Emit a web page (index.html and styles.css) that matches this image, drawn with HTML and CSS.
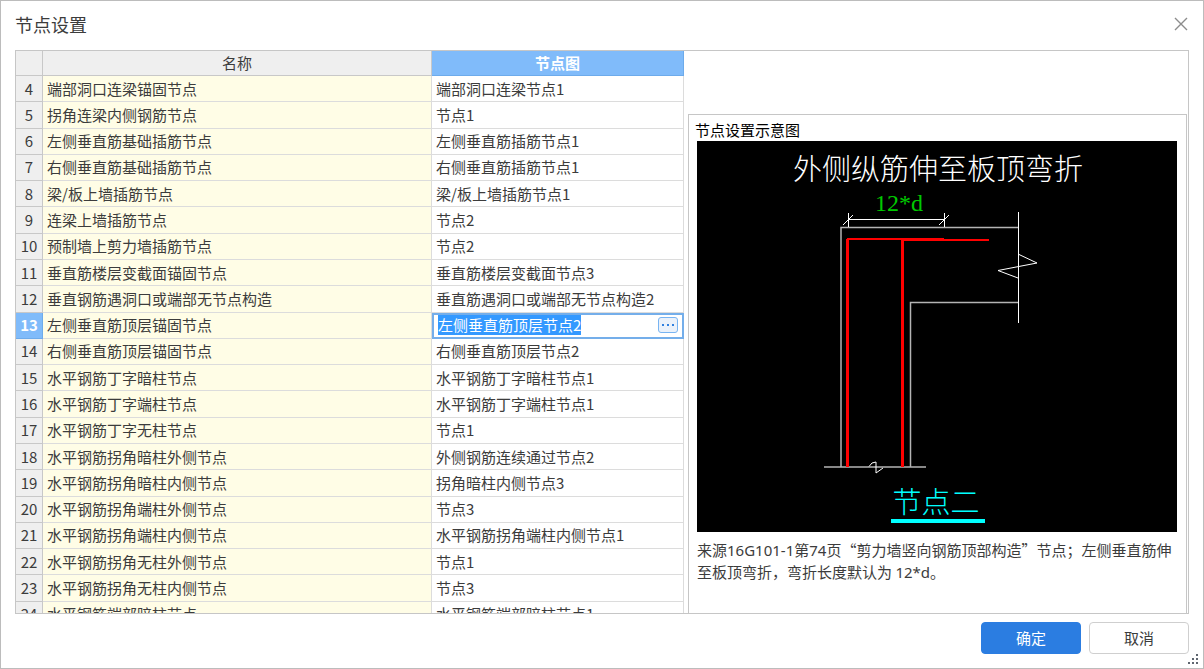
FILE: index.html
```html
<!DOCTYPE html>
<html lang="zh-CN">
<head>
<meta charset="utf-8">
<title>节点设置</title>
<link rel="stylesheet" href="styles.css">
</head>
<body>
<main class="dialog">
  <header class="titlebar">
    <h1 class="title">节点设置</h1>
    <button class="close" type="button" aria-label="关闭">
      <svg width="14" height="14" viewBox="0 0 14 14"><path d="M1 1L13 13M13 1L1 13" stroke="#8c8c8c" stroke-width="1.4" fill="none"/></svg>
    </button>
  </header>
  <div class="content">
    <div class="grid-pane">
      <table class="nodes">
        <colgroup><col class="col-no"><col class="col-name"><col class="col-node"></colgroup>
        <thead><tr><th></th><th>名称</th><th class="active">节点图</th></tr></thead>
        <tbody>
          <tr><th>4</th><td>端部洞口连梁锚固节点</td><td>端部洞口连梁节点1</td></tr>
          <tr><th>5</th><td>拐角连梁内侧钢筋节点</td><td>节点1</td></tr>
          <tr><th>6</th><td>左侧垂直筋基础插筋节点</td><td>左侧垂直筋插筋节点1</td></tr>
          <tr><th>7</th><td>右侧垂直筋基础插筋节点</td><td>右侧垂直筋插筋节点1</td></tr>
          <tr><th>8</th><td>梁/板上墙插筋节点</td><td>梁/板上墙插筋节点1</td></tr>
          <tr><th>9</th><td>连梁上墙插筋节点</td><td>节点2</td></tr>
          <tr><th>10</th><td>预制墙上剪力墙插筋节点</td><td>节点2</td></tr>
          <tr><th>11</th><td>垂直筋楼层变截面锚固节点</td><td>垂直筋楼层变截面节点3</td></tr>
          <tr><th>12</th><td>垂直钢筋遇洞口或端部无节点构造</td><td>垂直筋遇洞口或端部无节点构造2</td></tr>
          <tr><th class="active">13</th><td>左侧垂直筋顶层锚固节点</td><td class="editing"><div class="editor"><input class="field" id="node-field" type="text" aria-label="节点图" value="左侧垂直筋顶层节点2"><button class="more" type="button" aria-label="更多"><svg width="14" height="4" viewBox="0 0 14 4"><path d="M1 1h2v2H1zM6 1h2v2H6zM11 1h2v2h-2z" fill="#2f80e0"/></svg></button></div></td></tr>
          <tr><th>14</th><td>右侧垂直筋顶层锚固节点</td><td>右侧垂直筋顶层节点2</td></tr>
          <tr><th>15</th><td>水平钢筋丁字暗柱节点</td><td>水平钢筋丁字暗柱节点1</td></tr>
          <tr><th>16</th><td>水平钢筋丁字端柱节点</td><td>水平钢筋丁字端柱节点1</td></tr>
          <tr><th>17</th><td>水平钢筋丁字无柱节点</td><td>节点1</td></tr>
          <tr><th>18</th><td>水平钢筋拐角暗柱外侧节点</td><td>外侧钢筋连续通过节点2</td></tr>
          <tr><th>19</th><td>水平钢筋拐角暗柱内侧节点</td><td>拐角暗柱内侧节点3</td></tr>
          <tr><th>20</th><td>水平钢筋拐角端柱外侧节点</td><td>节点3</td></tr>
          <tr><th>21</th><td>水平钢筋拐角端柱内侧节点</td><td>水平钢筋拐角端柱内侧节点1</td></tr>
          <tr><th>22</th><td>水平钢筋拐角无柱外侧节点</td><td>节点1</td></tr>
          <tr><th>23</th><td>水平钢筋拐角无柱内侧节点</td><td>节点3</td></tr>
          <tr><th>24</th><td>水平钢筋端部暗柱节点</td><td>水平钢筋端部暗柱节点1</td></tr>
        </tbody>
      </table>
    </div>
    <section class="preview">
      <h2 class="preview-title">节点设置示意图</h2>
      <svg class="drawing" viewBox="0 0 480 391" role="img" aria-label="外侧纵筋伸至板顶弯折">
        <rect width="480" height="391" fill="#000"/>
        <g fill="none" stroke="#b4b4b4" stroke-width="1.5">
          <path d="M144 326V86.500H321M213.500 326V161.500H321"/>
          <path d="M127 326H229"/>
        </g>
        <g fill="none" stroke="#fff" stroke-width="1">
          <path d="M151.500 72V86M247.500 72V86M321.500 71V182M151 78.500H248" shape-rendering="crispEdges"/>
          <path d="M146 84L156 74M242 84L252 74"/>
          <path d="M321 113L340 122L301 129.500L321 137M172 325.500L175 322L179 321V332L186 327"/>
        </g>
        <g fill="none" stroke="#f00" shape-rendering="crispEdges">
          <path d="M150.500 326V98" stroke-width="3"/>
          <path d="M150 98H247" stroke-width="2"/>
          <path d="M205.500 326V98" stroke-width="3"/>
          <path d="M205 99H292" stroke-width="2"/>
        </g>
        <text class="cad-title" x="241" y="39">外侧纵筋伸至板顶弯折</text>
        <text class="cad-dim" x="202" y="70">12*d</text>
        <text class="cad-name" x="239" y="372">节点二</text>
        <rect x="194" y="378" width="94" height="4" fill="#0ff"/>
      </svg>
      <p class="note">来源<span class="latin">16G101-1</span>第<span class="latin">74</span>页“剪力墙竖向钢筋顶部构造”节点；左侧垂直筋伸至板顶弯折，弯折长度默认为 <span class="latin">12*d</span>。</p>
    </section>
  </div>
  <footer class="footer">
    <button class="btn primary" type="button">确定</button>
    <button class="btn" type="button">取消</button>
  </footer>
  <svg class="grip" width="10" height="10" viewBox="0 0 10 10"><path d="M8 0h2v2H8zM4 4h2v2H4zM8 4h2v2H8zM0 8h2v2H0zM4 8h2v2H4zM8 8h2v2H8z" fill="#5f6670"/></svg>
</main>
<script src="main.js"></script>
</body>
</html>
```

FILE: styles.css
```css
* { box-sizing: border-box; }

body {
  margin: 0;
  font: 15px/20px "Noto Sans CJK SC", sans-serif;
  color: #3c3c3c;
  background: #fff;
}

button, input { font: inherit; color: inherit; }

.dialog {
  position: relative;
  display: flex;
  flex-direction: column;
  height: 100vh;
  padding: 0 14px 14px;
  border: 1px solid #bcbcbc;
}

.titlebar {
  display: flex;
  align-items: center;
  justify-content: space-between;
  height: 49px;
  padding-bottom: 3px;
}

.title {
  margin: 0;
  font-size: 18px;
  font-weight: 400;
}

.close {
  display: flex;
  padding: 0 1px;
  border: 0;
  background: none;
}

.content {
  flex: 1;
  min-height: 0;
  display: grid;
  grid-template-columns: 668fr 504fr;
  overflow: hidden;
  border: 1px solid #c6c6c6;
}

.grid-pane { min-height: 0; overflow: hidden; }

.nodes {
  width: 100%;
  height: 577px;
  table-layout: fixed;
  border-collapse: separate;
  border-spacing: 0;
}

.col-no { width: 27px; }
.col-node { width: 252px; }

.nodes th, .nodes td {
  padding: 0 4px;
  border: solid #dcdcdc;
  border-width: 0 1px 1px 0;
  text-align: left;
  white-space: nowrap;
}

.nodes th {
  padding: 0;
  border-color: #c8c8c8;
  background: #efefef;
  font-weight: 400;
  text-align: center;
}

.nodes thead th { height: 25px; }
.nodes td:nth-child(2) { background: #fffde6; }

.nodes .active {
  border-color: #6dabeb;
  background: #80bbfa;
  color: #fff;
  font-weight: 700;
}

.nodes .editing {
  padding: 0 5px 0 6px;
  outline: 2px solid #74aeea;
  outline-offset: -2px;
}

.editor { display: flex; align-items: center; height: 20px; }

.field {
  flex: 1;
  min-width: 0;
  height: 20px;
  padding: 0;
  border: 0;
  outline: 0;
  background: none;
}

.field::selection { background: rgba(51, 153, 255, 0.996); color: #fff; }

.more {
  display: flex;
  align-items: center;
  justify-content: center;
  width: 20px;
  height: 16px;
  padding: 0;
  border: 1px solid #78b4f2;
  border-radius: 3px;
  background: #eaf1fa;
}

.preview {
  margin: 63px 1px 0 4px;
  padding: 5px 9px 6px 8px;
  border: solid #c6c6c6;
  border-width: 1px 1px 0;
}

.preview-title {
  margin: 0 -2px 1px;
  font-size: 15px;
  font-weight: 400;
  color: #000;
}

.drawing { display: block; width: 100%; }

.cad-title, .cad-name {
  font-size: 29px;
  font-weight: 300;
  text-anchor: middle;
}

.cad-title { fill: #fff; }
.cad-name { fill: #0ff; }

.cad-dim {
  font: 24px "Liberation Serif", serif;
  fill: #00c800;
  text-anchor: middle;
}

.note { margin: 7px 0 0; line-height: 22px; }
.latin { font-family: "Noto Sans", sans-serif; }

.footer {
  display: flex;
  justify-content: flex-end;
  gap: 8px;
  padding-top: 8px;
}

.btn {
  width: 100px;
  height: 32px;
  padding: 0;
  border: 1px solid #cfcfcf;
  border-radius: 4px;
  background: #fff;
}

.primary {
  border-color: #2b7de1;
  background: #2b7de1;
  color: #fff;
}

.grip { position: absolute; right: 5px; bottom: 4px; }
```

FILE: main.js
```js
const field = document.getElementById("node-field");
field.focus();
field.select();
```
